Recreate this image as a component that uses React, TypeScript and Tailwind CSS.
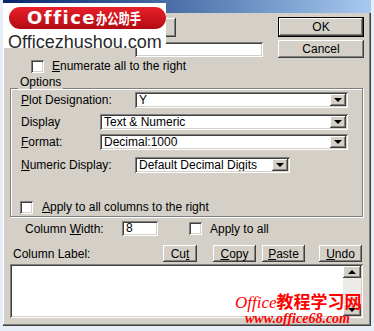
import React from "react";

const raised =
  "shadow-[inset_-1px_-1px_0_#404040,inset_1px_1px_0_#ffffff,inset_-2px_-2px_0_#808080,inset_2px_2px_0_#d4d0c8]";
const sunken =
  "shadow-[inset_1px_1px_0_#808080,inset_-1px_-1px_0_#ffffff,inset_2px_2px_0_#404040,inset_-2px_-2px_0_#d4d0c8]";

function Check() {
  return <span className={`block w-[13px] h-[13px] bg-white shrink-0 ${sunken}`} />;
}

function Arrow({ up = false }: { up?: boolean }) {
  return up ? (
    <span className="block w-0 h-0 border-l-[4px] border-r-[4px] border-b-[4px] border-l-transparent border-r-transparent border-b-black" />
  ) : (
    <span className="block w-0 h-0 border-l-[4px] border-r-[4px] border-t-[4px] border-l-transparent border-r-transparent border-t-black" />
  );
}

function Select({ value, className }: { value: string; className: string }) {
  return (
    <div className={`h-[16px] bg-white flex items-center p-[2px] ${sunken} ${className}`}>
      <span className="flex-1 pl-[2px] leading-[12px] whitespace-nowrap overflow-hidden">{value}</span>
      <span className={`w-[16px] h-[12px] bg-[#d4d0c8] flex items-center justify-center ${raised}`}>
        <Arrow />
      </span>
    </div>
  );
}

function Btn({ children, className }: { children: React.ReactNode; className: string }) {
  return (
    <div className={`h-[17px] bg-[#d4d0c8] flex items-center justify-center leading-[12px] ${raised} ${className}`}>
      {children}
    </div>
  );
}

export default function App() {
  return (
    <div className="relative w-[374px] h-[331px] overflow-hidden bg-[#e8eef8] text-[12px] text-black font-['Liberation_Sans',Arial,sans-serif]">
      {/* Dialog */}
      <div className="ml-[3px] w-[368px] h-[326px] bg-[#d4d0c8] flex flex-col shadow-[inset_-1px_-1px_0_#404040,inset_-2px_-2px_0_#808080,inset_1px_0_0_#ffffff]">
        <div className="h-[13px] bg-gradient-to-r from-[#0a246a] to-[#a6caf0]" />

        {/* top rows */}
        <div className="mt-[4px] flex h-[41px]">
          <div className="w-[275px] flex flex-col">
            <div className={`mt-[1px] ml-[97px] w-[76px] h-[19px] bg-[#d4d0c8] ${raised}`} />
            <div className={`mt-[5px] ml-[132px] w-[128px] h-[15px] bg-white ${sunken}`} />
          </div>
          <div className="flex flex-col">
            <div className="w-[86px] h-[20px] border border-black">
              <div className={`w-full h-full flex items-center justify-center leading-[12px] ${raised}`}>OK</div>
            </div>
            <div className={`mt-[3px] w-[86px] h-[18px] flex items-center justify-center leading-[12px] ${raised}`}>
              Cancel
            </div>
          </div>
        </div>

        <div className="mt-[2px] h-[13px] flex items-center">
          <span className="ml-[28px]"><Check /></span>
          <span className="ml-[8px] leading-[13px]">
            <u>E</u>numerate all to the right
          </span>
        </div>

        {/* Options group */}
        <div className="mt-[15px] ml-[7px] w-[353px] h-[129px] border border-[#808080] shadow-[1px_1px_0_#ffffff,inset_1px_1px_0_#ffffff] flex flex-col">
          <div className="-mt-[14px] ml-[7px] px-[2px] w-fit leading-[14px] bg-[#d4d0c8]">Options</div>

          <div className="mt-[3px] h-[16px] flex items-center">
            <span className="ml-[10px] w-[114px]"><u>P</u>lot Designation:</span>
            <Select value="Y" className="w-[213px]" />
          </div>
          <div className="mt-[6px] h-[16px] flex items-center">
            <span className="ml-[10px] w-[79px]">Display</span>
            <Select value="Text & Numeric" className="w-[248px]" />
          </div>
          <div className="mt-[4px] h-[16px] flex items-center">
            <span className="ml-[10px] w-[79px]"><u>F</u>ormat:</span>
            <Select value="Decimal:1000" className="w-[248px]" />
          </div>
          <div className="mt-[7px] h-[16px] flex items-center">
            <span className="ml-[10px] w-[114px]"><u>N</u>umeric Display:</span>
            <Select value="Default Decimal Digits" className="w-[155px]" />
          </div>

          <div className="mt-[28px] h-[13px] flex items-center">
            <span className="ml-[9px]"><Check /></span>
            <span className="ml-[9px] leading-[13px]">
              <u>A</u>pply to all columns to the right
            </span>
          </div>
        </div>

        {/* Column width */}
        <div className="mt-[4px] h-[15px] flex items-center">
          <span className="ml-[22px] w-[97px]">
            Column <u>W</u>idth:
          </span>
          <div className={`w-[36px] h-[15px] bg-white pl-[4px] leading-[15px] ${sunken}`}>8</div>
          <span className="ml-[31px]"><Check /></span>
          <span className="ml-[8px]">
            App<u>l</u>y to all
          </span>
        </div>

        {/* Column label */}
        <div className="mt-[9px] h-[17px] flex items-center">
          <span className="ml-[10px] w-[150px]">Column Label:</span>
          <Btn className="w-[34px]">Cu<u>t</u></Btn>
          <Btn className="ml-[16px] w-[43px]"><u>C</u>opy</Btn>
          <Btn className="ml-[6px] w-[43px]"><u>P</u>aste</Btn>
          <Btn className="ml-[14px] w-[43px]"><u>U</u>ndo</Btn>
        </div>

        <div className={`mt-[2px] ml-[7px] w-[353px] h-[54px] bg-white p-[2px] flex ${sunken}`}>
          <div className="flex-1" />
          <div className="w-[18px] bg-[#ecebe8] flex flex-col justify-between">
            <span className={`h-[12px] bg-[#d4d0c8] flex items-center justify-center ${raised}`}>
              <Arrow up />
            </span>
            <span className={`h-[12px] bg-[#d4d0c8] flex items-center justify-center ${raised}`}>
              <Arrow />
            </span>
          </div>
        </div>
      </div>

      {/* Watermark top-left */}
      <div className="absolute left-[3px] top-[3px] w-[163px] h-[45px] bg-white">
        <div className="ml-[6px] mt-[4px] w-[157px] h-[22px] rounded-full bg-gradient-to-b from-[#e8202a] to-[#b30a12] flex items-center pl-[18px] text-white font-bold">
          <span className="text-[18px] leading-[22px] tracking-[1.5px] font-['DejaVu_Sans',sans-serif]">Office</span>
          <span className="inline-block origin-left scale-x-[0.75] text-[15px] leading-[22px] font-['Noto_Sans_CJK_SC',sans-serif]">
            办公助手
          </span>
        </div>
        <div className="ml-[5px] mt-[4px] text-[18px] leading-[18px] text-[#2a2a2a]">Officezhushou.com</div>
      </div>

      {/* Watermark bottom-right */}
      <div className="absolute left-[235px] top-[292px] text-[#ff0000] font-['Liberation_Serif',serif]">
        <div className="flex items-baseline leading-[18px]">
          <span className="italic text-[17px]">Office</span>
          <span className="text-[17px] font-bold font-['Noto_Sans_CJK_SC',sans-serif]">教程学习网</span>
        </div>
        <div className="ml-[10px] italic font-bold text-[14px] leading-[14px]">www.office68.com</div>
      </div>
    </div>
  );
}
